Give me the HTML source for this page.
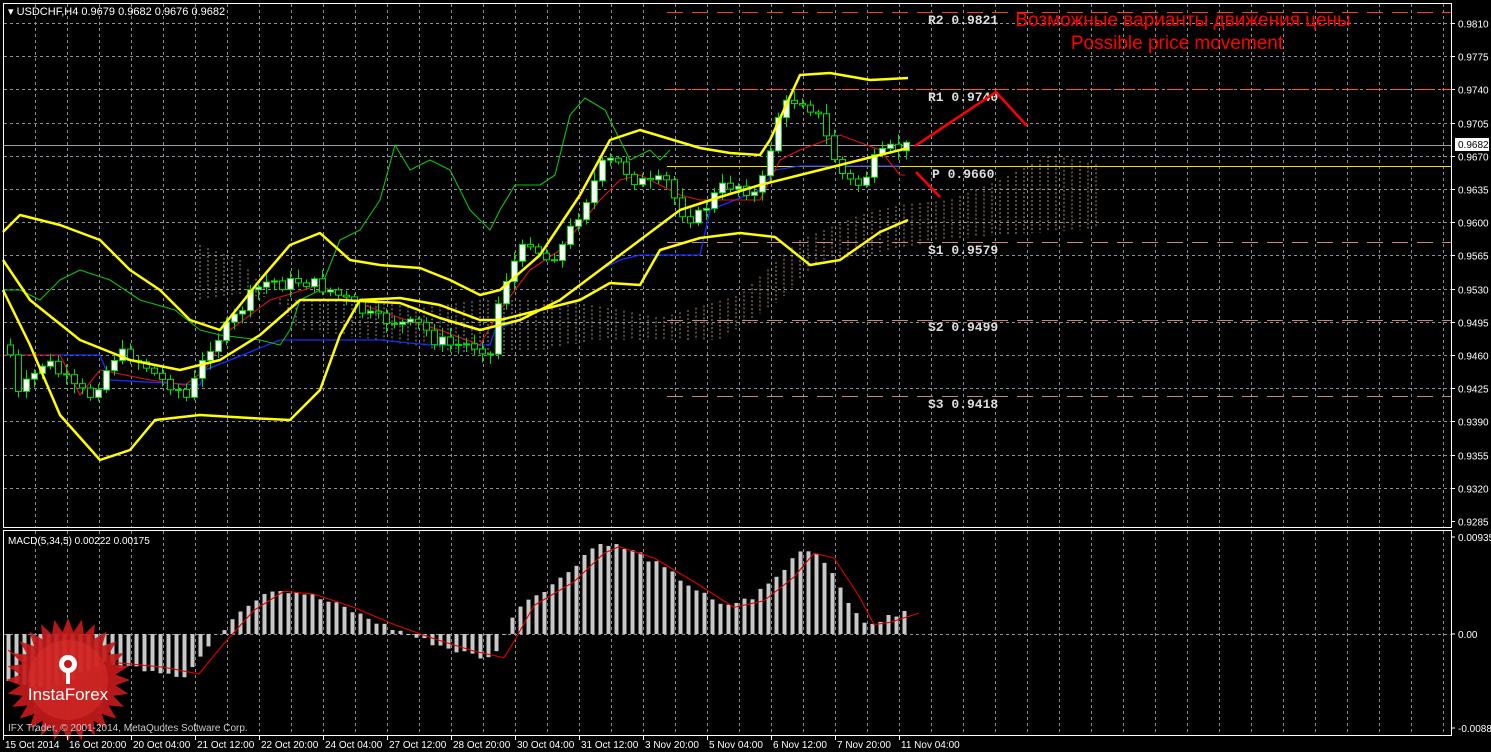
<!DOCTYPE html>
<html><head><meta charset="utf-8"><style>
html,body{margin:0;padding:0;background:#000;width:1491px;height:752px;overflow:hidden}
svg{display:block}
text{font-family:"Liberation Sans",sans-serif}
</style></head><body>
<svg id="s" width="1491" height="752" xmlns="http://www.w3.org/2000/svg">
<rect width="1491" height="752" fill="#000"/>
<g id="grid"></g>
<g id="cloud"></g>
<g id="lv"></g>
<g id="ind"></g>
<g id="candles"></g>
<g id="ind2"></g>
<g id="macd"></g>
<g id="logo">
 <polygon id="star" fill="#c41a1a" opacity="0.92"/>
 <circle cx="68" cy="680" r="40" fill="#e0302c" opacity="0.5"/>
 <g fill="#fff">
  <circle cx="68" cy="664" r="9"/>
  <circle cx="68" cy="664" r="4" fill="#c41a1a"/>
  <rect x="66" y="668" width="4" height="16"/>
 </g>
 <text x="68" y="700" font-size="17" fill="#fff" text-anchor="middle">InstaForex</text>
</g>
<g id="frame" fill="none" stroke="#fff" stroke-width="1">
 <rect x="3.5" y="3.5" width="1448" height="524"/>
 <rect x="3.5" y="530.5" width="1448" height="205"/>
</g>
<g id="axis"></g>
<text x="8" y="15" font-size="11" fill="#fff">▾ USDCHF,H4  0.9679 0.9682 0.9676 0.9682</text>
<text x="8" y="544" font-size="10" fill="#fff">MACD(5,34,5) 0.00222 0.00175</text>
<text x="8" y="731" font-size="10" fill="#ccc">IFX Trader, © 2001-2014, MetaQuotes Software Corp.</text>
<text x="1183" y="26" font-size="19" fill="#f00" text-anchor="middle">Возможные варианты движения цены</text>
<text x="1177" y="49" font-size="19" fill="#f00" text-anchor="middle">Possible price movement</text>
<g font-size="13" fill="#ddd" font-weight="bold">
<text x="928" y="24" style="font-family:'Liberation Mono',monospace">R2 0.9821</text>
<text x="928" y="101" style="font-family:'Liberation Mono',monospace">R1 0.9740</text>
<text x="932" y="178" style="font-family:'Liberation Mono',monospace">P 0.9660</text>
<text x="928" y="254" style="font-family:'Liberation Mono',monospace">S1 0.9579</text>
<text x="928" y="331" style="font-family:'Liberation Mono',monospace">S2 0.9499</text>
<text x="928" y="408" style="font-family:'Liberation Mono',monospace">S3 0.9418</text>
</g>
<polyline points="915,146 996,92 1027,126" fill="none" stroke="#f00" stroke-width="2.5"/>
<polyline points="916,172 940,197" fill="none" stroke="#f00" stroke-width="2.5"/>
</svg>
<script>
(function(){
var NS="http://www.w3.org/2000/svg";
function el(p,t,a){var e=document.createElementNS(NS,t);for(var k in a)e.setAttribute(k,a[k]);document.getElementById(p).appendChild(e);return e;}
function pl(p,pts,c,w){return el(p,"polyline",{points:pts.map(function(q){return q.join(",")}).join(" "),fill:"none",stroke:c,"stroke-width":w,"stroke-linejoin":"round"});}
for(var x=35;x<1451;x+=32){el("grid","line",{x1:x+.5,y1:4,x2:x+.5,y2:527,stroke:"#8a8f98","stroke-dasharray":"3,3"});el("grid","line",{x1:x+.5,y1:531,x2:x+.5,y2:735,stroke:"#8a8f98","stroke-dasharray":"3,3"});}
var prices=["0.9810","0.9775","0.9740","0.9705","0.9670","0.9635","0.9600","0.9565","0.9530","0.9495","0.9460","0.9425","0.9390","0.9355","0.9320","0.9285"];
for(var i=0;i<16;i++){var y=Math.round(23+i*33.2)+.5;if(i<15)el("grid","line",{x1:4,y1:y,x2:1451,y2:y,stroke:"#8a8f98","stroke-dasharray":"3,3"});
 el("axis","line",{x1:1451,y1:y,x2:1455,y2:y,stroke:"#fff"});var t=el("axis","text",{x:1458,y:y+4,"font-size":"10",fill:"#fff"});t.textContent=prices[i];}
[[537,"0.00935"],[634,"0.00"],[728,"-0.00882"]].forEach(function(a){el("axis","line",{x1:1451,y1:a[0],x2:1455,y2:a[0],stroke:"#fff"});var t=el("axis","text",{x:1458,y:a[0]+4,"font-size":"10",fill:"#fff"});t.textContent=a[1];});
el("grid","line",{x1:4,y1:634.5,x2:1451,y2:634.5,stroke:"#8a8f98","stroke-dasharray":"3,3"});
var dl=["15 Oct 2014","16 Oct 20:00","20 Oct 04:00","21 Oct 12:00","22 Oct 20:00","24 Oct 04:00","27 Oct 12:00","28 Oct 20:00","30 Oct 04:00","31 Oct 12:00","3 Nov 20:00","5 Nov 04:00","6 Nov 12:00","7 Nov 20:00","11 Nov 04:00"];
dl.forEach(function(s,i){var x=3+i*64;el("axis","line",{x1:x+.5,y1:735,x2:x+.5,y2:740,stroke:"#fff"});var t=el("axis","text",{x:x+2,y:748,"font-size":"10",fill:"#fff"});t.textContent=s;});
el("axis","rect",{x:1455,y:138,width:34,height:13,fill:"#fff"});var pt=el("axis","text",{x:1458,y:148,"font-size":"10",fill:"#000"});pt.textContent="0.9682";
function dash(y,c,d){el("lv","line",{x1:667,y1:y,x2:1451,y2:y,stroke:c,"stroke-dasharray":d,"stroke-width":1});}
dash(12.5,"#ff4010","16,9");dash(89.5,"#ff5520","16,9");dash(242.5,"#d08878","16,9");dash(320.5,"#c08878","16,9");dash(396.5,"#c08878","16,9");
el("lv","line",{x1:667,y1:166.5,x2:1451,y2:166.5,stroke:"#ffd800"});
el("lv","line",{x1:4,y1:145.5,x2:1451,y2:145.5,stroke:"#9aa0a8"});
function interp(pts,x){for(var i=1;i<pts.length;i++){if(x<=pts[i][0]){var a=pts[i-1],b=pts[i];return a[1]+(b[1]-a[1])*(x-a[0])/(b[0]-a[0]);}}return pts[pts.length-1][1];}
var cTop=[[200,300],[240,295],[300,300],[360,300],[420,308],[480,300],[560,300],[620,310],[660,318],[740,295],[800,240],[860,215],[900,205],[950,200],[1000,180],[1050,155],[1100,165]];
var cBot=[[200,245],[240,260],[300,330],[380,340],[440,350],[480,355],[540,350],[600,340],[660,340],[720,340],[780,300],[820,260],[870,255],[940,240],[1000,235],[1050,232],[1100,228]];
for(var x=200;x<=1100;x+=8){var a=interp(cTop,x),b=interp(cBot,x);el("cloud","line",{x1:x,y1:Math.min(a,b),x2:x,y2:Math.max(a,b),stroke:x<660?"#c9b8a8":"#e8b080","stroke-dasharray":"2,2","stroke-width":1,opacity:.8});}
var cl=[[8,345],[18,395],[30,380],[45,360],[60,375],[75,390],[90,395],[100,380],[115,355],[130,355],[145,365],[160,380],[175,385],[185,400],[195,380],[210,345],[225,330],[240,310],[255,290],[270,280],[285,285],[300,280],[315,285],[330,290],[345,300],[360,310],[375,320],[390,320],[405,325],[420,325],[435,340],[450,345],[465,345],[480,345],[490,355],[500,290],[515,260],[530,240],[545,260],[560,250],[575,220],[590,190],[605,160],[620,165],[635,180],[650,185],[665,180],[680,210],[695,220],[710,200],[725,185],[740,185],[755,195],[765,175],[775,120],[790,100],[805,100],[820,120],[830,150],[845,180],[860,185],[875,160],[890,150],[905,147]];
var prev=interp(cl,8),seed=7;function rnd(){seed=(seed*9301+49297)%233280;return seed/233280;}
for(var x=10;x<=906;x+=8){var c=interp(cl,x)+(rnd()-.5)*14,o=prev;prev=c;var tp=Math.min(o,c),bt=Math.max(o,c),h=Math.max(bt-tp,1);
 el("candles","line",{x1:x+.5,y1:tp-2-rnd()*8,x2:x+.5,y2:bt+2+rnd()*8,stroke:"#00e000"});
 el("candles","rect",{x:x-2.5,y:tp,width:6,height:h,fill:c<o?"#fff":"#000",stroke:"#00e000","stroke-width":1});}
var kij=[[3,355],[100,355],[110,380],[200,385],[205,370],[280,340],[380,340],[430,345],[490,345],[495,330],[520,320],[560,300],[600,270],[620,260],[640,255],[700,255],[710,210],[760,190],[775,170],[800,166],[900,166]];
pl("ind",kij,"#1030ff",1.3);
var ten=[[3,355],[60,355],[80,395],[100,370],[150,380],[185,385],[205,370],[230,330],[270,300],[320,285],[350,300],[400,318],[440,330],[480,345],[500,310],[530,270],[560,250],[600,200],[620,180],[640,175],[680,195],[700,200],[740,200],[760,200],[780,160],[800,150],[840,135],[880,150],[900,175],[905,175]];
pl("ind",ten,"#e01010",1.1);
var chi=[[3,290],[20,290],[40,300],[60,280],[80,270],[110,280],[140,300],[175,310],[200,330],[220,335],[260,340],[280,345],[290,330],[300,300],[320,290],[340,240],[360,230],[380,200],[395,145],[410,170],[430,160],[450,170],[470,210],[490,230],[500,210],[515,185],[540,185],[555,175],[570,115],[585,98],[605,110],[615,130],[630,160],[650,150],[660,160],[670,150]];
pl("ind",chi,"#10c010",1.1);
var up=[[3,232],[20,215],[60,225],[100,240],[130,270],[160,290],[190,320],[220,330],[260,280],[290,245],[320,233],[350,260],[380,265],[420,268],[450,280],[480,295],[500,290],[540,255],[580,195],[610,140],[640,130],[700,148],[730,153],[760,155],[770,140],[800,75],[830,73],[870,80],[908,78]];
var lo=[[3,290],[30,345],[60,415],[100,460],[130,450],[155,420],[200,415],[250,418],[290,420],[320,390],[340,335],[360,300],[400,298],[440,305],[480,320],[500,320],[540,310],[580,300],[610,283],[640,285],[660,250],[700,238],[740,233],[775,237],[810,265],[840,260],[880,232],[908,220]];
var mid=[[3,260],[30,300],[80,340],[130,360],[180,370],[220,360],[260,335],[300,300],[340,300],[400,303],[440,318],[480,330],[520,320],[560,300],[600,270],[640,240],[680,210],[720,197],[760,185],[800,175],[840,165],[880,155],[908,148]];
pl("ind2",up,"#ffff00",2.5);pl("ind2",lo,"#ffff00",2.5);pl("ind2",mid,"#ffff00",2.5);
var mv=[[8,-50],[40,-55],[60,-48],[100,-30],[150,-35],[185,-42],[210,-10],[240,25],[270,45],[300,42],[340,28],[380,10],[420,-5],[460,-18],[490,-25],[500,-8],[520,30],[560,55],[590,85],[605,92],[640,80],[680,55],[720,28],[750,35],[780,60],[800,85],[820,80],[845,40],[860,10],[875,12],[905,22]];
for(var x=8;x<=906;x+=8){var v=interp(mv,x)+(rnd()-.5)*6,y0=634;el("macd","rect",{x:x-1.5,y:v>0?y0-v:y0,width:4,height:Math.abs(v),fill:"#c8c8c8"});}
var sig=mv.map(function(p){return [p[0]+14,634-p[1]*0.95]});sig[0]=[8,650];
pl("macd",sig,"#e00000",1.1);
var pts=[],n=28;for(var i=0;i<n*2;i++){var r=i%2?48:62,a=i*Math.PI/n;pts.push((68+r*Math.cos(a)).toFixed(1)+","+(680+r*Math.sin(a)).toFixed(1));}
document.getElementById("star").setAttribute("points",pts.join(" "));
})();
</script>
</body></html>
